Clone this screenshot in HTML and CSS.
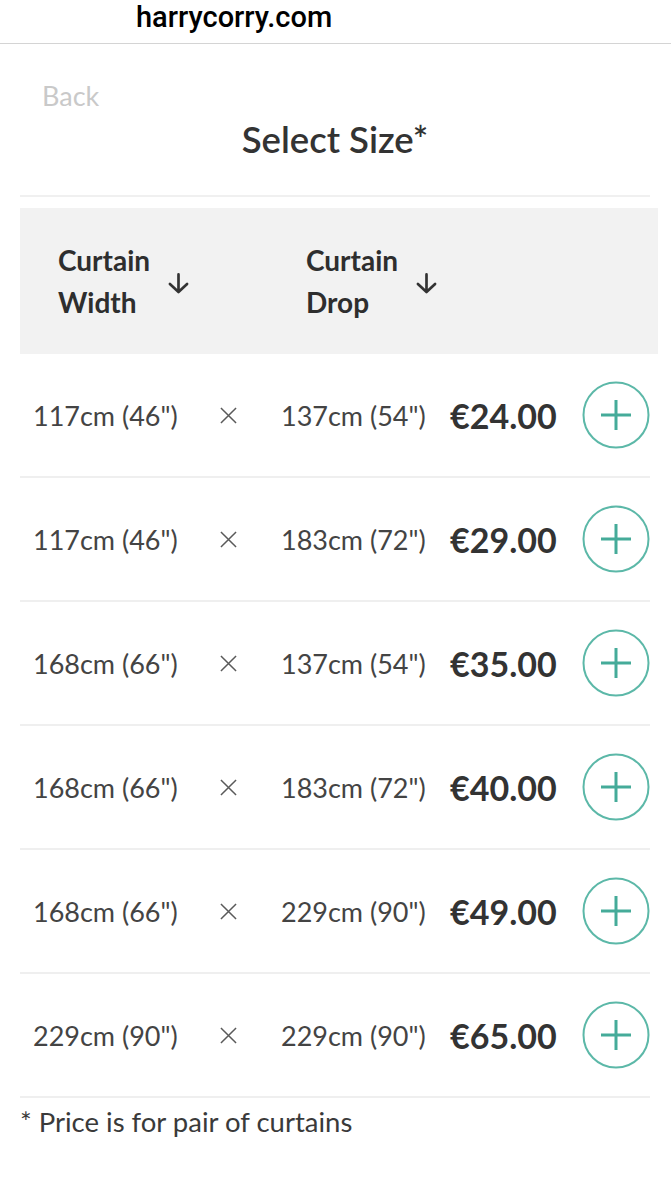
FILE: index.html
```html
<!DOCTYPE html>
<html>
<head>
<meta charset="utf-8">
<link rel="stylesheet" href="styles.css">
</head>
<body>
<div class="topbar"><span class="domain">harrycorry.com</span></div>
<main class="page">
  <div class="back">Back</div>
  <h1 class="title">Select Size*</h1>
  <div class="rule"></div>
  <div class="thead">
    <div class="th th-width"><span class="th-label">Curtain<br>Width</span>
      <svg class="arrow" viewBox="0 0 22 22"><path d="M11 1.5 V20 M2 11.5 L11 20 L20 11.5" fill="none" stroke="#333" stroke-width="2.8" stroke-linecap="round" stroke-linejoin="round"/></svg></div>
    <div class="th th-drop"><span class="th-label">Curtain<br>Drop</span>
      <svg class="arrow" viewBox="0 0 22 22"><path d="M11 1.5 V20 M2 11.5 L11 20 L20 11.5" fill="none" stroke="#333" stroke-width="2.8" stroke-linecap="round" stroke-linejoin="round"/></svg></div>
  </div>
  <div class="rows">
    <div class="row"><span class="w">117cm (46")</span><span class="x"><svg viewBox="0 0 18 18"><path d="M1 1 L17 17 M17 1 L1 17" stroke="#5a5a5a" stroke-width="1.6"/></svg></span><span class="d">137cm (54")</span><span class="price">€24.00</span><span class="add"><svg viewBox="0 0 68 68"><circle cx="34" cy="34" r="32.5" fill="none" stroke="#5cb8a8" stroke-width="2"/><path d="M34 19 V49 M19 34 H49" stroke="#45ab99" stroke-width="3"/></svg></span></div>
    <div class="row"><span class="w">117cm (46")</span><span class="x"><svg viewBox="0 0 18 18"><path d="M1 1 L17 17 M17 1 L1 17" stroke="#5a5a5a" stroke-width="1.6"/></svg></span><span class="d">183cm (72")</span><span class="price">€29.00</span><span class="add"><svg viewBox="0 0 68 68"><circle cx="34" cy="34" r="32.5" fill="none" stroke="#5cb8a8" stroke-width="2"/><path d="M34 19 V49 M19 34 H49" stroke="#45ab99" stroke-width="3"/></svg></span></div>
    <div class="row"><span class="w">168cm (66")</span><span class="x"><svg viewBox="0 0 18 18"><path d="M1 1 L17 17 M17 1 L1 17" stroke="#5a5a5a" stroke-width="1.6"/></svg></span><span class="d">137cm (54")</span><span class="price">€35.00</span><span class="add"><svg viewBox="0 0 68 68"><circle cx="34" cy="34" r="32.5" fill="none" stroke="#5cb8a8" stroke-width="2"/><path d="M34 19 V49 M19 34 H49" stroke="#45ab99" stroke-width="3"/></svg></span></div>
    <div class="row"><span class="w">168cm (66")</span><span class="x"><svg viewBox="0 0 18 18"><path d="M1 1 L17 17 M17 1 L1 17" stroke="#5a5a5a" stroke-width="1.6"/></svg></span><span class="d">183cm (72")</span><span class="price">€40.00</span><span class="add"><svg viewBox="0 0 68 68"><circle cx="34" cy="34" r="32.5" fill="none" stroke="#5cb8a8" stroke-width="2"/><path d="M34 19 V49 M19 34 H49" stroke="#45ab99" stroke-width="3"/></svg></span></div>
    <div class="row"><span class="w">168cm (66")</span><span class="x"><svg viewBox="0 0 18 18"><path d="M1 1 L17 17 M17 1 L1 17" stroke="#5a5a5a" stroke-width="1.6"/></svg></span><span class="d">229cm (90")</span><span class="price">€49.00</span><span class="add"><svg viewBox="0 0 68 68"><circle cx="34" cy="34" r="32.5" fill="none" stroke="#5cb8a8" stroke-width="2"/><path d="M34 19 V49 M19 34 H49" stroke="#45ab99" stroke-width="3"/></svg></span></div>
    <div class="row"><span class="w">229cm (90")</span><span class="x"><svg viewBox="0 0 18 18"><path d="M1 1 L17 17 M17 1 L1 17" stroke="#5a5a5a" stroke-width="1.6"/></svg></span><span class="d">229cm (90")</span><span class="price">€65.00</span><span class="add"><svg viewBox="0 0 68 68"><circle cx="34" cy="34" r="32.5" fill="none" stroke="#5cb8a8" stroke-width="2"/><path d="M34 19 V49 M19 34 H49" stroke="#45ab99" stroke-width="3"/></svg></span></div>
  </div>
  <p class="note">* Price is for pair of curtains</p>
</main>
</body>
</html>
```
FILE: styles.css
```css
html, body { margin: 0; padding: 0; background: #fff; }
body { font-family: Lato, "Open Sans", sans-serif; color: #3a3a3a; }
.topbar {
  height: 44px;
  border-bottom: 1px solid #d4d4d4;
  box-sizing: border-box;
  padding-left: 136px;
}
.domain {
  font-family: Roboto, "Liberation Sans", Arial, sans-serif;
  font-weight: 500;
  font-size: 29px;
  line-height: 34px;
  color: #000;
}
.page { padding: 0 13px 0 20px; }
.back {
  margin-top: 35px;
  padding-left: 22px;
  font-size: 27px;
  line-height: 34px;
  color: #c9c9c9;
}
.title {
  margin: 4px 0 0;
  text-align: center;
  font-size: 36.5px;
  font-weight: 600;
  line-height: 44px;
  color: #333;
  padding-right: 8px;
}
.rule { height: 2px; background: #f0f0f0; margin: 34px 8px 0 0; }
.thead {
  margin-top: 11px;
  background: #f2f2f2;
  height: 146px;
  display: flex;
  align-items: center;
  padding-left: 38px;
}
.th { display: flex; align-items: center; }
.th-width { width: 248px; }
.th-label {
  font-weight: 700;
  font-size: 28px;
  line-height: 42px;
  color: #2e2e2e;
}
.arrow { width: 21px; height: 21px; margin-left: 18px; margin-top: 4px; }
.row {
  height: 124px;
  box-sizing: border-box;
  border-bottom: 2px solid #efefef;
  display: grid;
  grid-template-columns: 187px 61px 169px 132px 68px;
  align-items: center;
  padding-left: 13px;
  margin-right: 8px;
  font-size: 27px;
  color: #444;
}
.x svg { width: 17px; height: 17px; display: block; }
.price { font-size: 34px; font-weight: 700; color: #333; }
.add svg { width: 68px; height: 68px; display: block; }
.note { margin: 7px 0 0; font-size: 27.5px; line-height: 34px; color: #3a3a3a; }
```
